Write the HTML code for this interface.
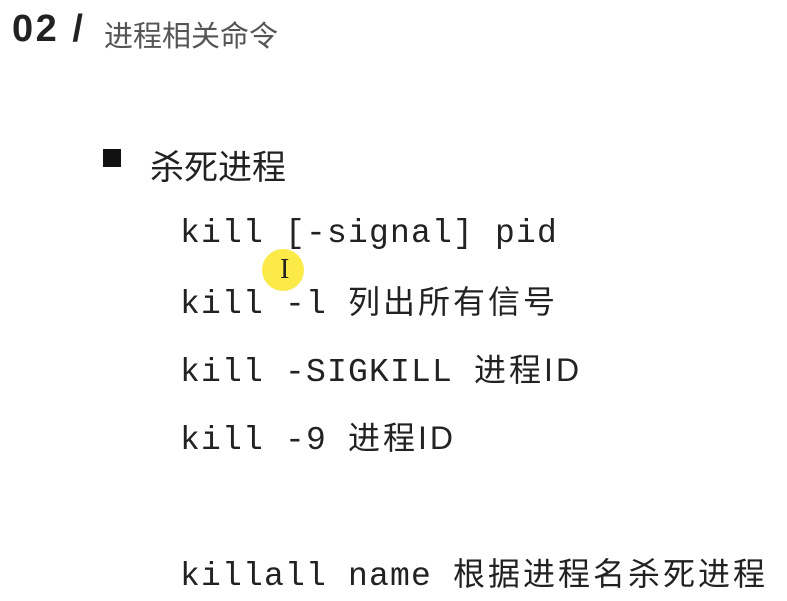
<!DOCTYPE html>
<html><head><meta charset="utf-8"><style>
body{margin:0;width:787px;height:601px;background:#fff;position:relative;overflow:hidden;font-family:"Liberation Sans","Noto Sans CJK SC",sans-serif}
.a{position:absolute;white-space:nowrap}
.m{font-family:"Liberation Mono","Noto Sans CJK SC",monospace;font-size:33px;letter-spacing:1.2px;color:#222;line-height:36px}
.m span{font-family:"Liberation Sans","Noto Sans CJK SC",sans-serif;font-size:32px;letter-spacing:3px;line-height:36px}
</style></head><body>
<div class="a" style="left:12px;top:8px;font-size:38px;font-weight:bold;color:#222;letter-spacing:2.5px">02 /</div>
<div class="a" style="left:104px;top:13px;font-size:29px;color:#555">进程相关命令</div>
<div class="a" style="left:103px;top:149px;width:18px;height:18px;background:#111"></div>
<div class="a" style="left:150px;top:140px;font-size:34px;color:#222">杀死进程</div>
<div class="a m" style="left:180px;top:216px">kill [-signal] pid</div>
<div class="a m" style="left:180px;top:284px">kill -l <span>列出所有信号</span></div>
<div class="a m" style="left:180px;top:352px">kill -SIGKILL <span>进程ID</span></div>
<div class="a m" style="left:180px;top:420px">kill -9 <span>进程ID</span></div>
<div class="a m" style="left:180px;top:556px">killall name <span>根据进程名杀死进程</span></div>
<div class="a" style="left:262px;top:249px;width:42px;height:42px;border-radius:50%;background:rgba(250,230,40,0.85)"></div>
<div class="a" style="left:280px;top:254px;font-family:'Liberation Serif',serif;font-size:28px;color:#222">I</div>
</body></html>
